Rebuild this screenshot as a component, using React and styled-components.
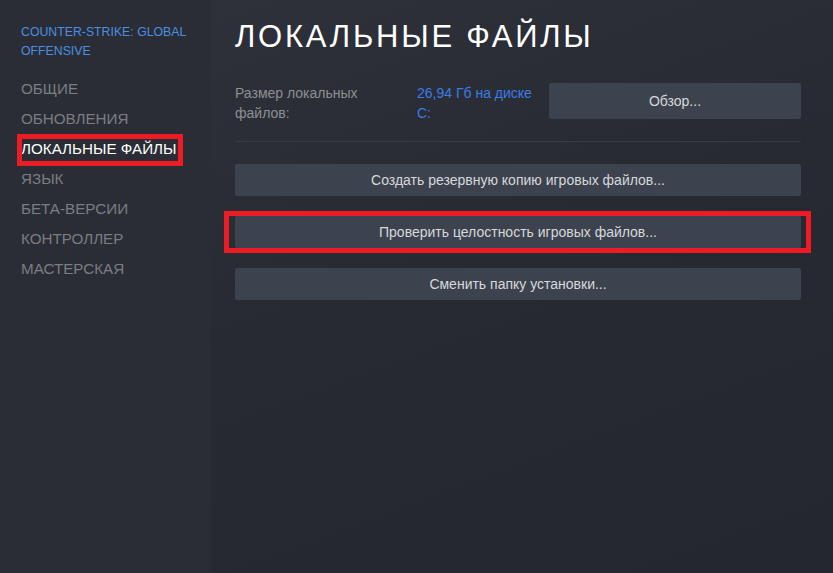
import React from "react";
import styled, { createGlobalStyle } from "styled-components";

const Global = createGlobalStyle`
  html, body { margin: 0; padding: 0; width: 833px; height: 573px; overflow: hidden; background: #262931; }
  #root { width: 833px; height: 573px; }
  * { box-sizing: border-box; }
`;

const Window = styled.div`
  display: flex;
  width: 833px;
  height: 573px;
  font-family: Arial, "Liberation Sans", sans-serif;
`;

const Sidebar = styled.nav`
  width: 211px;
  flex-shrink: 0;
  background: #2a2d35;
  padding: 23px 0 0 21px;
  display: flex;
  flex-direction: column;
`;

const GameTitle = styled.div`
  color: #4b8fe2;
  font-size: 12.3px;
  line-height: 19px;
  text-transform: uppercase;
  margin-bottom: 13px;
  width: 175px;
`;

const NavItem = styled.div`
  position: relative;
  color: ${(p) => (p.$active ? "#ffffff" : "#7b7d82")};
  font-size: 15.2px;
  line-height: 30px;
  height: 30px;
  text-transform: uppercase;
  white-space: nowrap;
`;

const Highlight = styled.div`
  position: absolute;
  left: ${(p) => p.$x}px;
  top: ${(p) => p.$y}px;
  width: ${(p) => p.$w}px;
  height: ${(p) => p.$h}px;
  border: 5px solid #ed1c24;
  pointer-events: none;
`;

const Main = styled.main`
  flex: 1;
  background: linear-gradient(160deg, #2e3139 0%, #272a32 45%, #24272f 100%);
  padding: 20px 32px 0 24px;
  display: flex;
  flex-direction: column;
`;

const Title = styled.h1`
  margin: 0 0 29px;
  color: #ffffff;
  font-weight: 400;
  font-size: 31px;
  line-height: 34px;
  letter-spacing: 2.75px;
`;

const SizeRow = styled.div`
  display: grid;
  grid-template-columns: 182px 132px 1fr;
  align-items: start;
`;

const Label = styled.div`
  color: #8c8f94;
  font-size: 14px;
  line-height: 20px;
  width: 140px;
`;

const Value = styled.div`
  color: #3b7ce8;
  font-size: 14px;
  line-height: 20px;
`;

const Divider = styled.div`
  height: 1px;
  background: #363a42;
  margin: 18px 0 22px;
`;

const Button = styled.button`
  display: block;
  width: 100%;
  height: ${(p) => p.$h || 32}px;
  border: none;
  border-radius: 2px;
  background: #3d434e;
  color: #d6d8db;
  font-family: Arial, "Liberation Sans", sans-serif;
  font-size: 14px;
  padding: 0;
  cursor: pointer;
  text-align: center;
`;

const ButtonStack = styled.div`
  display: flex;
  flex-direction: column;
  gap: 20px;
`;

const Wrap = styled.div`
  position: relative;
`;

const nav = [
  "Общие",
  "Обновления",
  "Локальные файлы",
  "Язык",
  "Бета-версии",
  "Контроллер",
  "Мастерская",
];

export default function App() {
  return (
    <>
      <Global />
      <Window>
        <Sidebar>
          <GameTitle>Counter-Strike: Global Offensive</GameTitle>
          {nav.map((n, i) => (
            <NavItem key={n} $active={i === 2}>
              {n}
              {i === 2 && <Highlight $x={-4} $y={0} $w={166} $h={32} />}
            </NavItem>
          ))}
        </Sidebar>
        <Main>
          <Title>ЛОКАЛЬНЫЕ ФАЙЛЫ</Title>
          <SizeRow>
            <Label>Размер локальных файлов:</Label>
            <Value>26,94 Гб на диске C:</Value>
            <Button $h={36}>Обзор...</Button>
          </SizeRow>
          <Divider />
          <ButtonStack>
            <Button>Создать резервную копию игровых файлов...</Button>
            <Wrap>
              <Button>Проверить целостность игровых файлов...</Button>
              <Highlight $x={-11} $y={-5} $w={587} $h={42} />
            </Wrap>
            <Button>Сменить папку установки...</Button>
          </ButtonStack>
        </Main>
      </Window>
    </>
  );
}
